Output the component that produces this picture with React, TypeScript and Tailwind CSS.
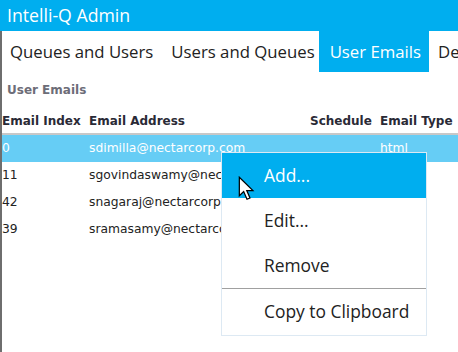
import React from 'react';

const rows = [
  { index: '0', email: 'sdimilla@nectarcorp.com', schedule: '', type: 'html' },
  { index: '11', email: 'sgovindaswamy@nectarcorp.com', schedule: '', type: 'html' },
  { index: '42', email: 'snagaraj@nectarcorp.com', schedule: '', type: 'html' },
  { index: '39', email: 'sramasamy@nectarcorp.com', schedule: '', type: 'html' },
];

const tabs = [
  { label: 'Queues and Users', cls: 'pl-[8px] pr-[9px]' },
  { label: 'Users and Queues', cls: 'pl-[9px] pr-[4px]' },
  { label: 'User Emails', cls: 'pl-[11px] pr-[8px] bg-[#00aeef] text-white' },
  { label: 'Devices', cls: 'pl-[9px] pr-[8px]' },
];

function Cursor() {
  return (
    <svg width="20" height="26" viewBox="0 0 16 21" className="absolute left-[238px] top-[176px]">
      <path
        d="M1 1 L1 16 L4.5 12.6 L7.2 18.8 L9.6 17.8 L7 11.8 L12 11.8 Z"
        fill="white"
        stroke="black"
        strokeWidth="1"
        strokeLinejoin="miter"
      />
    </svg>
  );
}

export default function App() {
  return (
    <div className="relative w-[458px] h-[352px] overflow-hidden bg-white">
      {/* Title bar */}
      <div className="h-[31px] bg-[#00aeef] flex items-center pl-[7px] text-white text-[17.7px] font-['Open_Sans',sans-serif]">
        Intelli-Q Admin
      </div>

      <div className="h-[321px] border-l-2 border-[#6e6e6e]">
        {/* Tabs */}
        <div className="h-[41px] flex font-['Open_Sans',sans-serif] text-[16.75px] text-[#222] whitespace-nowrap">
          {tabs.map((t) => (
            <div key={t.label} className={'flex items-center ' + t.cls}>
              {t.label}
            </div>
          ))}
        </div>

        {/* Section label */}
        <div className="h-[36px] flex items-center pl-[5px] font-['DejaVu_Sans',sans-serif] font-bold text-[12px] text-[#6d6d78]">
          User Emails
        </div>

        {/* Table */}
        <div className="font-['DejaVu_Sans',sans-serif] text-[12.3px] text-[#222]">
          <div className="h-[27px] grid grid-cols-[87px_221px_70px_1fr] items-center font-bold text-[12px] text-[#2a2a36] border-b-2 border-[#c8c8c8] whitespace-nowrap">
            <div>Email Index</div>
            <div>Email Address</div>
            <div>Schedule</div>
            <div>Email Type</div>
          </div>
          {rows.map((r, i) => (
            <div
              key={r.index}
              className={
                'h-[27px] grid grid-cols-[87px_221px_70px_1fr] items-center whitespace-nowrap ' +
                (i === 0 ? 'bg-[#66cdf5] text-white' : '')
              }
            >
              <div>{r.index}</div>
              <div className="overflow-hidden">{r.email}</div>
              <div>{r.schedule}</div>
              <div>{r.type}</div>
            </div>
          ))}
        </div>
      </div>

      {/* Context menu */}
      <div className="absolute left-[221px] top-[152px] w-[206px] h-[184px] bg-white border border-[#dde9f3] font-['Open_Sans',sans-serif] text-[17.4px] text-[#222]">
        <div className="h-[45px] flex items-center pl-[42px] bg-[#00aeef] text-white">Add...</div>
        <div className="h-[45px] flex items-center pl-[42px]">Edit...</div>
        <div className="h-[45px] flex items-center pl-[42px]">Remove</div>
        <div className="h-px bg-[#a0a0a0]" />
        <div className="h-[45px] flex items-center pl-[42px]">Copy to Clipboard</div>
      </div>

      <Cursor />
    </div>
  );
}
